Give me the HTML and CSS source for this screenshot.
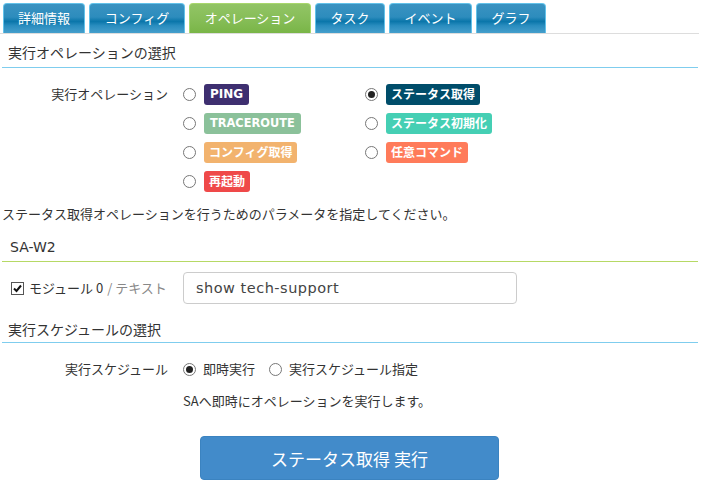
FILE: index.html
```html
<!DOCTYPE html>
<html lang="ja">
<head>
<meta charset="utf-8">
<link rel="stylesheet" href="styles.css">
</head>
<body>
<div class="page">
  <ul class="tabs">
    <li class="tab">詳細情報</li>
    <li class="tab">コンフィグ</li>
    <li class="tab active">オペレーション</li>
    <li class="tab">タスク</li>
    <li class="tab">イベント</li>
    <li class="tab">グラフ</li>
  </ul>

  <h2 class="sec sec-blue">実行オペレーションの選択</h2>
  <div class="form-row ops-row">
    <div class="label">実行オペレーション</div>
    <div class="ops">
      <label class="op"><span class="radio"></span><span class="badge b-ping">PING</span></label>
      <label class="op"><span class="radio on"></span><span class="badge b-status">ステータス取得</span></label>
      <label class="op"><span class="radio"></span><span class="badge b-trace">TRACEROUTE</span></label>
      <label class="op"><span class="radio"></span><span class="badge b-init">ステータス初期化</span></label>
      <label class="op"><span class="radio"></span><span class="badge b-config">コンフィグ取得</span></label>
      <label class="op"><span class="radio"></span><span class="badge b-cmd">任意コマンド</span></label>
      <label class="op"><span class="radio"></span><span class="badge b-reboot">再起動</span></label>
    </div>
  </div>

  <p class="desc">ステータス取得オペレーションを行うためのパラメータを指定してください。</p>

  <h3 class="sec sec-green">SA-W2</h3>
  <div class="module-row">
    <div class="mod-label"><span class="check">
      <svg width="11" height="11" viewBox="0 0 11 11"><path d="M2 5.5 L4.5 8 L9 2.5" fill="none" stroke="#111" stroke-width="2"/></svg>
    </span>モジュール 0 <span class="muted">/ テキスト</span></div>
    <div class="input">show tech-support</div>
  </div>

  <h2 class="sec sec-blue sec-sched">実行スケジュールの選択</h2>
  <div class="form-row sched-row">
    <div class="label">実行スケジュール</div>
    <div class="sched">
      <label class="opt"><span class="radio on"></span>即時実行</label>
      <label class="opt"><span class="radio"></span>実行スケジュール指定</label>
    </div>
  </div>
  <p class="note">SAへ即時にオペレーションを実行します。</p>
  <div class="actions"><button class="run">ステータス取得 実行</button></div>
</div>
</body>
</html>
```

FILE: styles.css
```css
* { box-sizing: border-box; }
html, body { margin: 0; padding: 0; background: #fff; }
body {
  font-family: "Noto Sans CJK JP", "Noto Sans", sans-serif;
  font-size: 13px;
  color: #333;
  line-height: 1.4;
}
.page { width: 700px; }

.tabs {
  list-style: none;
  margin: 0;
  padding: 3px 0 0 3px;
  display: flex;
  gap: 4px;
  border-bottom: 1px solid #ddd;
  width: 699px;
}
.tab {
  height: 30px;
  padding: 0 14px;
  display: flex;
  align-items: center;
  justify-content: center;
  color: #fff;
  font-size: 13px;
  border: 1px solid #62c2ea;
  border-bottom: none;
  border-radius: 4px 4px 0 0;
  background: linear-gradient(#3a93c1 0%, #2d8cbd 45%, #0a76aa 60%, #2a8dbf 75%, #459fcc 100%);
}
.tab:nth-child(1) { width: 82px; }
.tab:nth-child(2) { width: 96px; }
.tab:nth-child(3) { width: 122px; }
.tab:nth-child(4) { width: 70px; }
.tab:nth-child(5) { width: 83px; }
.tab:nth-child(6) { width: 70px; }
.tab.active {
  border-color: #a8d76c;
  background: linear-gradient(#92c465 0%, #86bd57 55%, #79b547 100%);
}

.sec {
  margin: 0 0 0 2px;
  width: 696px;
  font-weight: normal;
  font-size: 14px;
  color: #333;
  padding: 0 0 4px 6px;
  height: 34px;
  display: flex;
  align-items: flex-end;
}
.sec-blue { border-bottom: 1px solid #7fcdee; }
.sec-sched { height: 39px; padding-bottom: 2px; }
.sec-green {
  border-bottom: 1px solid #b6d965;
  height: 38px;
  padding-left: 8px;
  padding-bottom: 3px;
  font-family: "DejaVu Sans", sans-serif;
  font-size: 14px;
}

.form-row { display: flex; }
.label {
  width: 168px;
  text-align: right;
  flex: none;
}
.ops-row { margin-top: 16px; }
.ops-row .label { line-height: 20px; }
.ops {
  margin-left: 15px;
  display: grid;
  grid-template-columns: 182px 182px;
  row-gap: 8px;
}
.op { display: flex; align-items: center; height: 21px; }
.radio {
  width: 13px; height: 13px;
  border: 1px solid #777;
  border-radius: 50%;
  display: inline-block;
  flex: none;
  margin-right: 7px;
  position: relative;
  background: #fff;
}
.radio.on::after {
  content: "";
  position: absolute;
  left: 2px; top: 2px;
  width: 7px; height: 7px;
  border-radius: 50%;
  background: #222;
}
.op .radio { margin-right: 8px; }
.badge {
  display: inline-flex;
  align-items: center;
  height: 21px;
  padding: 0 5px;
  border-radius: 3px;
  color: #fff;
  font-weight: bold;
  font-size: 12px;
}
.b-ping, .b-trace {
  font-family: "DejaVu Sans", sans-serif;
  font-size: 12px;
  padding: 0 6px;
}
.b-trace { font-size: 11.4px; }
.b-ping { background: #3e2f70; }
.b-status { background: #004d6a; }
.b-trace { background: #8bc19a; }
.b-init { background: #45cfb4; }
.b-config { background: #f2b36e; }
.b-cmd { background: #ff7b5a; }
.b-reboot { background: #ef4949; }

.desc { margin: 12px 0 0 2px; line-height: 20px; }

.module-row {
  display: flex;
  align-items: center;
  margin-top: 10px;
}
.mod-label {
  width: 183px;
  padding-left: 11px;
  display: flex;
  align-items: center;
  flex: none;
}
.check {
  width: 13px; height: 13px;
  border: 1px solid #555;
  display: inline-flex;
  align-items: center;
  justify-content: center;
  margin-right: 5px;
  background: #fff;
}
.muted { color: #888; margin-left: 4px; }
.input {
  width: 334px;
  height: 32px;
  border: 1px solid #ccc;
  border-radius: 4px;
  padding: 0 12px;
  display: flex;
  align-items: center;
  color: #444;
  font-family: "DejaVu Sans", sans-serif;
  font-size: 14.5px;
  letter-spacing: 0.5px;
}

.sched-row { margin-top: 15px; align-items: center; height: 22px; }
.sched { margin-left: 15px; display: flex; gap: 14px; }
.opt { display: flex; align-items: center; }

.note { margin: 11px 0 0 183px; line-height: 20px; }

.actions { margin-top: 25px; padding-left: 200px; }
.run {
  width: 299px;
  height: 44px;
  border: 1px solid #3b83c0;
  border-radius: 4px;
  background: #428bca;
  color: #fff;
  font-family: "Noto Sans CJK JP", "Noto Sans", sans-serif;
  font-size: 17px;
  padding: 0;
}
```
